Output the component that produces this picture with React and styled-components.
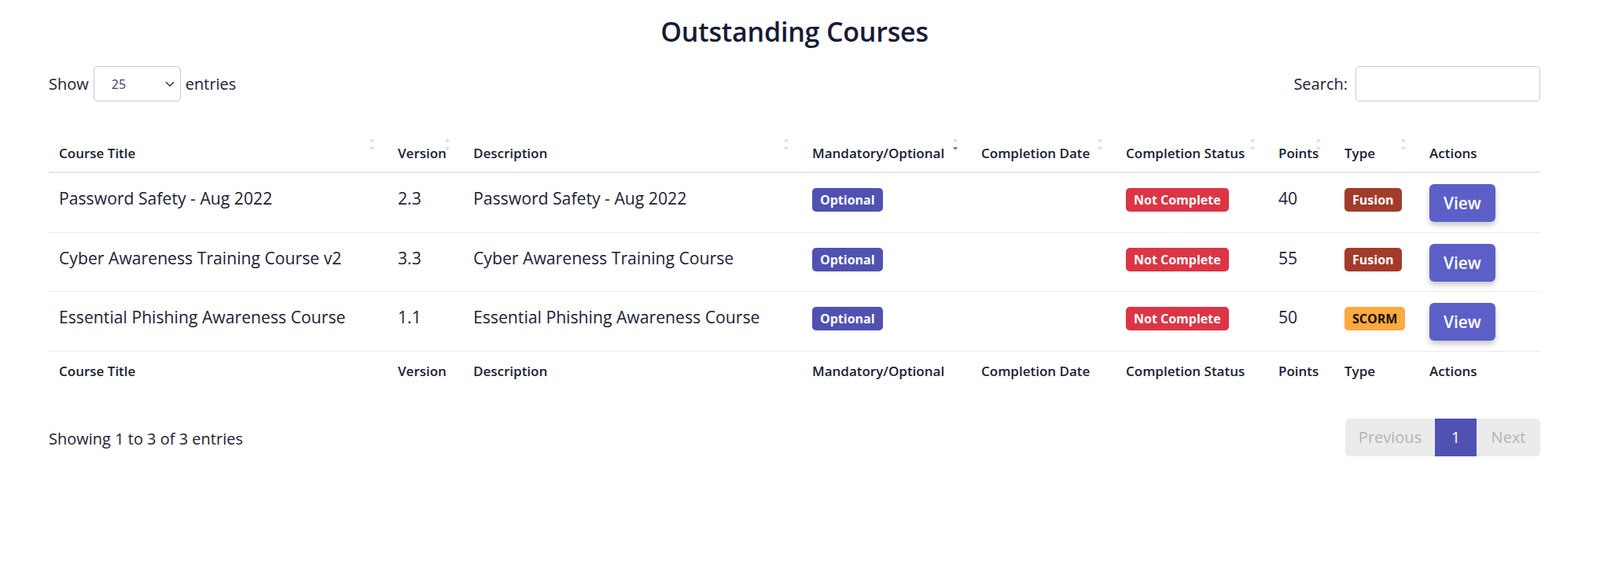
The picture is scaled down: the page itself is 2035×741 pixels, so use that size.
import styled, { createGlobalStyle, css } from "styled-components";

const GlobalStyle = createGlobalStyle`
  body {
    margin: 0;
    background: #ffffff;
    font-family: "Open Sans", "Noto Sans", Arial, sans-serif;
    color: #1e2235;
  }
`;

const columns = [
  { title: "Course Title", width: 431, sortable: true },
  { title: "Version", width: 96, sortable: true },
  { title: "Description", width: 431, sortable: true },
  { title: "Mandatory/Optional", width: 215, sortable: true, active: true },
  { title: "Completion Date", width: 184, sortable: true },
  { title: "Completion Status", width: 194, sortable: true },
  { title: "Points", width: 84, sortable: true },
  { title: "Type", width: 108, sortable: true },
  { title: "Actions", width: 154 },
];

const courses = [
  {
    title: "Password Safety - Aug 2022",
    version: "2.3",
    description: "Password Safety - Aug 2022",
    points: 40,
    type: "Fusion",
  },
  {
    title: "Cyber Awareness Training Course v2",
    version: "3.3",
    description: "Cyber Awareness Training Course",
    points: 55,
    type: "Fusion",
  },
  {
    title: "Essential Phishing Awareness Course",
    version: "1.1",
    description: "Essential Phishing Awareness Course",
    points: 50,
    type: "SCORM",
  },
];

const badgeColours = {
  optional: { bg: "#5051b1", fg: "#ffffff" },
  danger: { bg: "#dc3545", fg: "#ffffff" },
  Fusion: { bg: "#a33b2a", fg: "#ffffff" },
  SCORM: { bg: "#ffa940", fg: "#111111" },
};

function App() {
  return (
    <>
      <GlobalStyle />
      <Page>
        <Title>Outstanding Courses</Title>

        <Controls>
          <Label>
            Show
            <SelectWrap>
              <Select defaultValue="25">
                <option value="10">10</option>
                <option value="25">25</option>
                <option value="50">50</option>
                <option value="100">100</option>
              </Select>
              <Chevron viewBox="0 0 12 8" aria-hidden="true">
                <path d="M1 1.2 L6 6.2 L11 1.2" />
              </Chevron>
            </SelectWrap>
            entries
          </Label>
          <Label>
            Search:
            <SearchInput type="search" />
          </Label>
        </Controls>

        <Table>
          <colgroup>
            {columns.map((c) => (
              <col key={c.title} style={{ width: c.width }} />
            ))}
          </colgroup>
          <thead>
            <tr>
              {columns.map((c) => (
                <HeadCell key={c.title} $sortable={c.sortable} $active={c.active}>
                  {c.title}
                </HeadCell>
              ))}
            </tr>
          </thead>
          <tbody>
            {courses.map((course) => (
              <tr key={course.title}>
                <Cell>{course.title}</Cell>
                <Cell>{course.version}</Cell>
                <Cell>{course.description}</Cell>
                <Cell>
                  <Badge $kind="optional">Optional</Badge>
                </Cell>
                <Cell />
                <Cell>
                  <Badge $kind="danger">Not Complete</Badge>
                </Cell>
                <Cell>{course.points}</Cell>
                <Cell>
                  <Badge $kind={course.type}>{course.type}</Badge>
                </Cell>
                <Cell>
                  <ViewButton type="button">View</ViewButton>
                </Cell>
              </tr>
            ))}
          </tbody>
          <tfoot>
            <tr>
              {columns.map((c) => (
                <FootCell key={c.title}>{c.title}</FootCell>
              ))}
            </tr>
          </tfoot>
        </Table>

        <Footer>
          <Info>Showing 1 to 3 of 3 entries</Info>
          <Pagination>
            <PageButton disabled $pad={16.5}>Previous</PageButton>
            <PageButton $current $pad={21}>1</PageButton>
            <PageButton disabled $pad={18.5}>Next</PageButton>
          </Pagination>
        </Footer>
      </Page>
    </>
  );
}

const Page = styled.div`
  width: 1897px;
  margin-left: 62px;
  padding-top: 20px;
`;

const Title = styled.h1`
  margin: 0;
  font-size: 34px;
  line-height: 40px;
  font-weight: 600;
  text-align: center;
  color: #161b33;
  letter-spacing: -0.2px;
`;

const Controls = styled.div`
  display: flex;
  justify-content: space-between;
  align-items: center;
  margin-top: 24px;
  height: 45px;
`;

const Label = styled.label`
  display: flex;
  align-items: center;
  gap: 6px;
  font-size: 20px;
  color: #1e2235;
`;

const SelectWrap = styled.span`
  position: relative;
  display: inline-flex;
`;

const Select = styled.select`
  appearance: none;
  width: 111px;
  height: 45px;
  padding: 0 0 0 22px;
  border: 1px solid #c9c9c9;
  border-radius: 5px;
  background: #ffffff;
  font-family: inherit;
  font-size: 16px;
  color: #3c4260;
  outline: none;
`;

const Chevron = styled.svg`
  position: absolute;
  right: 8px;
  top: 19px;
  width: 12px;
  height: 8px;
  pointer-events: none;
  fill: none;
  stroke: #333a4d;
  stroke-width: 1.6;
`;

const SearchInput = styled.input`
  width: 235px;
  height: 45px;
  box-sizing: border-box;
  margin-left: 4px;
  border: 1px solid #c9c9c9;
  border-radius: 5px;
  outline: none;
`;

const Table = styled.table`
  width: 1897px;
  margin-top: 36px;
  border-collapse: collapse;
  table-layout: fixed;
`;

const arrow = css`
  content: "";
  position: absolute;
  right: 17px;
  width: 0;
  height: 0;
  border-left: 3px solid transparent;
  border-right: 3px solid transparent;
`;

const HeadCell = styled.th`
  position: relative;
  padding: 16px 13px 10px;
  border-bottom: 2px solid #e6e6e6;
  text-align: left;
  font-size: 17px;
  line-height: 27px;
  font-weight: 600;
  color: #1a1d33;
  white-space: nowrap;

  ${({ $sortable, $active }) =>
    $sortable &&
    css`
      &::before {
        ${arrow};
        top: 11px;
        border-bottom: 4px solid #dcdcdc;
      }
      &::after {
        ${arrow};
        top: 22px;
        border-top: 4px solid ${$active ? "#7a7a7a" : "#dcdcdc"};
      }
    `}
`;

const Cell = styled.td`
  padding: 14px 13px 12.5px;
  border-bottom: 1px solid #ebebeb;
  vertical-align: top;
  font-size: 21.2px;
  line-height: 35px;
  color: #1e2235;
  white-space: nowrap;
`;

const FootCell = styled.th`
  padding: 11px 13px 12px;
  text-align: left;
  font-size: 17px;
  line-height: 27px;
  font-weight: 600;
  color: #1a1d33;
  white-space: nowrap;
`;

const Badge = styled.span`
  display: inline-block;
  vertical-align: middle;
  height: 30px;
  padding: 0 10px;
  border-radius: 5px;
  font-size: 16px;
  line-height: 30px;
  font-weight: 700;
  background: ${({ $kind }) => badgeColours[$kind].bg};
  color: ${({ $kind }) => badgeColours[$kind].fg};
`;

const ViewButton = styled.button`
  display: inline-block;
  vertical-align: top;
  height: 48px;
  padding: 0 18px;
  border: none;
  border-radius: 6px;
  background: #5c5fc8;
  color: #ffffff;
  font-family: inherit;
  font-size: 20.8px;
  font-weight: 600;
  box-shadow: 0 4px 7px rgba(0, 0, 0, 0.22);
  cursor: pointer;
`;

const Footer = styled.div`
  display: flex;
  justify-content: space-between;
  align-items: center;
  margin-top: 35px;
`;

const Info = styled.div`
  font-size: 20px;
  color: #1e2235;
  padding-top: 4px;
`;

const Pagination = styled.div`
  display: flex;
  border-radius: 6px;
  overflow: hidden;
`;

const PageButton = styled.button`
  height: 48px;
  padding: 0 ${({ $pad }) => $pad}px;
  border: none;
  background: ${({ $current }) => ($current ? "#4f52b3" : "#ebebeb")};
  color: ${({ $current }) => ($current ? "#ffffff" : "#b4b4b4")};
  font-family: inherit;
  font-size: 20px;
`;

export default App;
